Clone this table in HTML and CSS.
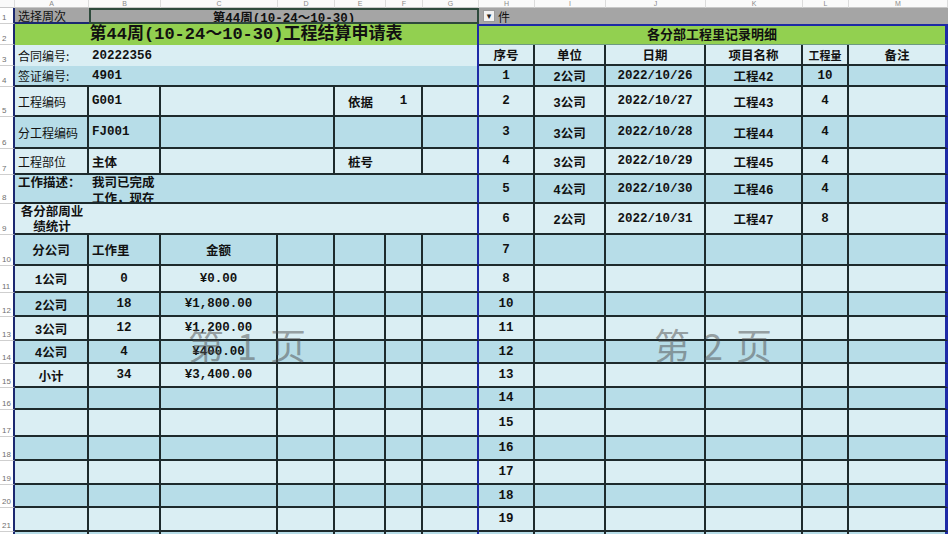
FILE: index.html
```html
<!DOCTYPE html>
<html lang="zh">
<head>
<meta charset="utf-8">
<title>工程结算申请表</title>
<link rel="stylesheet" href="styles.css">
</head>
<body>
<div class="sheet">
  <div class="row colhdr">
    <div class="corner"></div>
    <div class="ch">A</div><div class="ch">B</div><div class="ch">C</div><div class="ch">D</div><div class="ch">E</div><div class="ch">F</div><div class="ch">G</div><div class="ch">H</div><div class="ch">I</div><div class="ch">J</div><div class="ch">K</div><div class="ch">L</div><div class="ch">M</div>
  </div>

  <div class="row r1">
    <div class="rh">1</div>
    <div class="c a1 reg l">选择周次</div>
    <div class="c sel s6">第44周(10-24～10-30)</div>
    <div class="c wk s6"><span class="dd">▾</span>件</div>
  </div>

  <div class="row r2">
    <div class="rh">2</div>
    <div class="c title s7">第44周(10-24～10-30)工程结算申请表</div>
    <div class="c sub s6">各分部工程里记录明细</div>
  </div>

  <div class="row lt">
    <div class="rh">3</div>
    <div class="c reg l nr nb">合同编号:</div>
    <div class="c l s6 nb pb">20222356</div>
    <div class="c">序号</div><div class="c">单位</div><div class="c">日期</div><div class="c">项目名称</div><div class="c sm">工程量</div><div class="c mr">备注</div>
  </div>

  <div class="row dk">
    <div class="rh">4</div>
    <div class="c reg l nr">签证编号:</div>
    <div class="c l s6 pb">4901</div>
    <div class="c">1</div><div class="c">2公司</div><div class="c">2022/10/26</div><div class="c">工程42</div><div class="c">10</div><div class="c mr"></div>
  </div>

  <div class="row lt">
    <div class="rh">5</div>
    <div class="c reg l">工程编码</div>
    <div class="c l">G001</div>
    <div class="c s2"></div>
    <div class="c nr">依据</div>
    <div class="c">1</div>
    <div class="c pb"></div>
    <div class="c">2</div><div class="c">3公司</div><div class="c">2022/10/27</div><div class="c">工程43</div><div class="c">4</div><div class="c mr"></div>
  </div>

  <div class="row dk">
    <div class="rh">6</div>
    <div class="c reg l">分工程编码</div>
    <div class="c l">FJ001</div>
    <div class="c s2"></div>
    <div class="c nr"></div>
    <div class="c"></div>
    <div class="c pb"></div>
    <div class="c">3</div><div class="c">3公司</div><div class="c">2022/10/28</div><div class="c">工程44</div><div class="c">4</div><div class="c mr"></div>
  </div>

  <div class="row lt">
    <div class="rh">7</div>
    <div class="c reg l">工程部位</div>
    <div class="c l">主体</div>
    <div class="c s2"></div>
    <div class="c nr">桩号</div>
    <div class="c"></div>
    <div class="c pb"></div>
    <div class="c">4</div><div class="c">3公司</div><div class="c">2022/10/29</div><div class="c">工程45</div><div class="c">4</div><div class="c mr"></div>
  </div>

  <div class="row dk">
    <div class="rh">8</div>
    <div class="c wrap nr">工作描述：</div>
    <div class="c wrap nr">我司已完成工作，现在</div>
    <div class="c s5 pb"></div>
    <div class="c">5</div><div class="c">4公司</div><div class="c">2022/10/30</div><div class="c">工程46</div><div class="c">4</div><div class="c mr"></div>
  </div>

  <div class="row lt">
    <div class="rh">9</div>
    <div class="c wrap ctr nr">各分部周业绩统计</div>
    <div class="c s6 pb"></div>
    <div class="c">6</div><div class="c">2公司</div><div class="c">2022/10/31</div><div class="c">工程47</div><div class="c">8</div><div class="c mr"></div>
  </div>

  <div class="row dk">
    <div class="rh">10</div>
    <div class="c">分公司</div><div class="c l">工作里</div><div class="c">金额</div><div class="c"></div><div class="c"></div><div class="c"></div><div class="c pb"></div>
    <div class="c">7</div><div class="c"></div><div class="c"></div><div class="c"></div><div class="c"></div><div class="c mr"></div>
  </div>

  <div class="row lt">
    <div class="rh">11</div>
    <div class="c">1公司</div><div class="c">0</div><div class="c">¥0.00</div><div class="c"></div><div class="c"></div><div class="c"></div><div class="c pb"></div>
    <div class="c">8</div><div class="c"></div><div class="c"></div><div class="c"></div><div class="c"></div><div class="c mr"></div>
  </div>

  <div class="row dk">
    <div class="rh">12</div>
    <div class="c">2公司</div><div class="c">18</div><div class="c">¥1,800.00</div><div class="c"></div><div class="c"></div><div class="c"></div><div class="c pb"></div>
    <div class="c">10</div><div class="c"></div><div class="c"></div><div class="c"></div><div class="c"></div><div class="c mr"></div>
  </div>

  <div class="row lt">
    <div class="rh">13</div>
    <div class="c">3公司</div><div class="c">12</div><div class="c">¥1,200.00</div><div class="c"></div><div class="c"></div><div class="c"></div><div class="c pb"></div>
    <div class="c">11</div><div class="c"></div><div class="c"></div><div class="c"></div><div class="c"></div><div class="c mr"></div>
  </div>

  <div class="row dk">
    <div class="rh">14</div>
    <div class="c">4公司</div><div class="c">4</div><div class="c">¥400.00</div><div class="c"></div><div class="c"></div><div class="c"></div><div class="c pb"></div>
    <div class="c">12</div><div class="c"></div><div class="c"></div><div class="c"></div><div class="c"></div><div class="c mr"></div>
  </div>

  <div class="row lt">
    <div class="rh">15</div>
    <div class="c">小计</div><div class="c">34</div><div class="c">¥3,400.00</div><div class="c"></div><div class="c"></div><div class="c"></div><div class="c pb"></div>
    <div class="c">13</div><div class="c"></div><div class="c"></div><div class="c"></div><div class="c"></div><div class="c mr"></div>
  </div>

  <div class="row dk">
    <div class="rh">16</div>
    <div class="c"></div><div class="c"></div><div class="c"></div><div class="c"></div><div class="c"></div><div class="c"></div><div class="c pb"></div>
    <div class="c">14</div><div class="c"></div><div class="c"></div><div class="c"></div><div class="c"></div><div class="c mr"></div>
  </div>

  <div class="row lt">
    <div class="rh">17</div>
    <div class="c"></div><div class="c"></div><div class="c"></div><div class="c"></div><div class="c"></div><div class="c"></div><div class="c pb"></div>
    <div class="c">15</div><div class="c"></div><div class="c"></div><div class="c"></div><div class="c"></div><div class="c mr"></div>
  </div>

  <div class="row dk">
    <div class="rh">18</div>
    <div class="c"></div><div class="c"></div><div class="c"></div><div class="c"></div><div class="c"></div><div class="c"></div><div class="c pb"></div>
    <div class="c">16</div><div class="c"></div><div class="c"></div><div class="c"></div><div class="c"></div><div class="c mr"></div>
  </div>

  <div class="row lt">
    <div class="rh">19</div>
    <div class="c"></div><div class="c"></div><div class="c"></div><div class="c"></div><div class="c"></div><div class="c"></div><div class="c pb"></div>
    <div class="c">17</div><div class="c"></div><div class="c"></div><div class="c"></div><div class="c"></div><div class="c mr"></div>
  </div>

  <div class="row dk">
    <div class="rh">20</div>
    <div class="c"></div><div class="c"></div><div class="c"></div><div class="c"></div><div class="c"></div><div class="c"></div><div class="c pb"></div>
    <div class="c">18</div><div class="c"></div><div class="c"></div><div class="c"></div><div class="c"></div><div class="c mr"></div>
  </div>

  <div class="row lt">
    <div class="rh">21</div>
    <div class="c"></div><div class="c"></div><div class="c"></div><div class="c"></div><div class="c"></div><div class="c"></div><div class="c pb"></div>
    <div class="c">19</div><div class="c"></div><div class="c"></div><div class="c"></div><div class="c"></div><div class="c mr"></div>
  </div>

  <div class="row dk">
    <div class="rh"></div>
    <div class="c"></div><div class="c"></div><div class="c"></div><div class="c"></div><div class="c"></div><div class="c"></div><div class="c pb"></div>
    <div class="c"></div><div class="c"></div><div class="c"></div><div class="c"></div><div class="c"></div><div class="c mr"></div>
  </div>

  <div class="wm wm1">第 1 页</div>
  <div class="wm wm2">第 2 页</div>
</div>
</body>
</html>
```

FILE: styles.css
```css
:root {
  --ln: #1d2a2c;
  --lt: #daeef3;
  --dk: #b7dde8;
  --blue: #1e2aa6;
  --navy: #1b2870;
  --gray: #a5a5a5;
  --green: #92d050;
}

* { box-sizing: border-box; }

html, body { margin: 0; height: 100%; }

body {
  overflow: hidden;
  background: #fff;
  color: #111;
  font-family: "Liberation Mono", "Noto Sans CJK SC", monospace;
}

.sheet {
  position: relative;
  display: grid;
  width: 950px;
  height: 534px;
  overflow: hidden;
  grid-template-columns: 15px 74px 72px 117px 57px 51px 37px 56px 56px 71px 100px 97px 46px 99px 1fr;
  grid-template-rows: 8px 16px 21px 21px 21px 30px 32px 26px 29px 31px 31px 27px 24px 24px 23px 24px 22px 27px 24px 24px 23px 24px 24px;
}

.row { display: contents; }

.corner, .ch {
  font: 7px/7px "Liberation Sans", sans-serif;
  color: #8a8a8a;
  text-align: center;
  border-right: 1px solid #dcdcdc;
  border-bottom: 1px solid #c8c8c8;
  background: #fafafa;
}
.corner { grid-column: 1; }

.rh {
  grid-column: 1;
  display: flex;
  align-items: flex-end;
  padding: 0 0 1px 2px;
  font: 8px/1 "Liberation Sans", sans-serif;
  color: #707070;
  background: #fff;
  border-right: 2px solid var(--navy);
  border-bottom: 1px solid #cfcfcf;
}

.c {
  display: flex;
  align-items: center;
  justify-content: center;
  min-width: 0;
  overflow: hidden;
  white-space: nowrap;
  border-right: 2px solid var(--ln);
  border-bottom: 2px solid var(--ln);
  font-size: 12.5px;
  font-weight: 700;
}

.lt > .c { background: var(--lt); }
.dk > .c { background: var(--dk); }

.l { justify-content: flex-start; padding-left: 3px; }

.reg {
  font-family: "Noto Sans CJK SC", sans-serif;
  font-weight: 400;
  font-size: 12px;
}

.nr { border-right: none; }
.nb { border-bottom: none; }
.pb { border-right-color: var(--blue); }
.mr { border-right: 3px solid var(--blue); }

.s2 { grid-column: span 2; }
.s5 { grid-column: span 5; }
.s6 { grid-column: span 6; }
.s7 { grid-column: span 7; }

.wrap {
  display: block;
  white-space: normal;
  line-height: 16px;
  padding: 1px 0 0 3px;
}
.wrap.ctr { padding: 2px 0 0; line-height: 15px; text-align: center; }

.sm { font-size: 11px; }

/* row 1 */
.r1 > .c { background: var(--gray); border: none; }
.r1 > .a1 { border-bottom: 2px solid var(--navy); }
.r1 > .sel { border: 2px solid #2e4a3c; }
.r1 > .wk {
  justify-content: flex-start;
  font-family: "Noto Sans CJK SC", sans-serif;
  font-weight: 400;
  font-size: 12px;
}
.dd {
  display: flex;
  align-items: center;
  justify-content: center;
  width: 12px;
  height: 12px;
  margin: 0 3px 0 4px;
  background: #f2f2f2;
  border: 1px solid #9a9a9a;
  font: 9px/1 "DejaVu Sans", sans-serif;
  color: #222;
}

/* row 2 */
.r2 > .c { background: var(--green); border-right: none; border-bottom: none; line-height: 1; }
.r2 > .title { font-size: 17px; border-right: 2px solid var(--blue); }
.r2 > .sub {
  font-size: 13px;
  border-top: 2px solid var(--blue);
  border-right: 3px solid var(--blue);
  border-bottom: 1px solid #6d9a80;
}

/* watermarks */
.wm {
  position: absolute;
  top: 326px;
  font: 400 36px/1 "Noto Sans CJK SC", sans-serif;
  color: rgba(80, 80, 80, 0.5);
  word-spacing: 5px;
  white-space: pre;
  pointer-events: none;
}
.wm1 { left: 188px; }
.wm2 { left: 654px; }
```
